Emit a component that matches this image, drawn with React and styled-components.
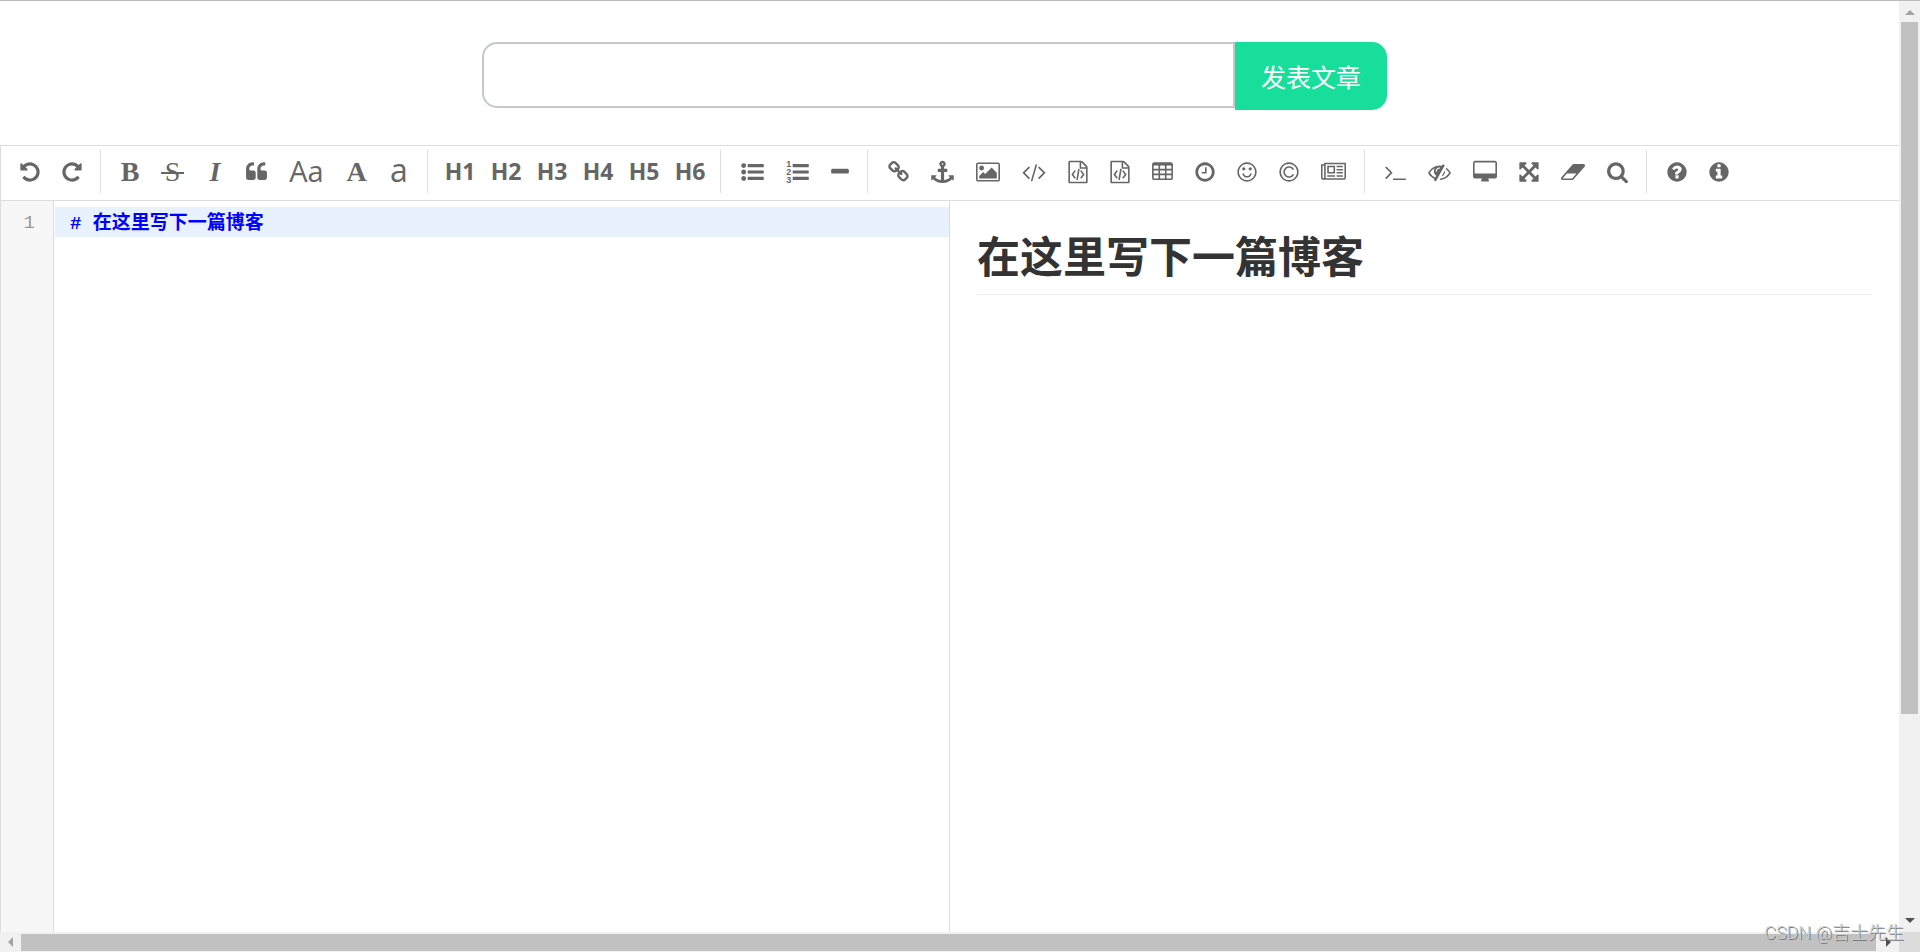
import { useState } from 'react'
import styled, { createGlobalStyle, css } from 'styled-components'

const sans = `'Open Sans', 'Noto Sans CJK SC', sans-serif`

const GlobalStyle = createGlobalStyle`
  * {
    box-sizing: border-box;
  }

  body {
    margin: 0;
    background: #fff;
    font-family: ${sans};
  }
`

// WINDOW

const Window = styled.div`
  display: grid;
  grid-template-columns: minmax(0, 1fr) 21px;
  grid-template-rows: minmax(0, 1fr) 20px;
  height: 100vh;
  border-top: 1px solid #bbb;
  overflow: hidden;
`

const Page = styled.main`
  display: flex;
  flex-direction: column;
  min-width: 0;
`

// SCROLLBARS

const Scrollbar = styled.div`
  display: flex;
  flex-direction: ${({ $horizontal }) => ($horizontal ? 'row' : 'column')};
  background: #f1f1f1;
`

const ScrollArrow = styled.button`
  display: flex;
  align-items: center;
  justify-content: center;
  flex: 0 0 ${({ $active }) => ($active ? '23px' : '21px')};
  padding: 0;
  border: 0;
  background: none;
  color: ${({ $active }) => ($active ? '#505050' : '#a3a3a3')};
`

const ScrollTrack = styled.div`
  flex: 1;
  display: flex;
  flex-direction: inherit;
  padding: ${({ $horizontal }) => ($horizontal ? '2px 0 1px' : '0 2px')};
`

const ScrollThumb = styled.div`
  flex: 0 0 ${({ $size }) => $size};
  background: #c1c1c1;
`

const Corner = styled.div`
  background: #dcdcdc;
`

function Arrow({ label, points, active }) {
  return (
    <ScrollArrow type="button" aria-label={label} $active={active}>
      <svg width="10" height="10" viewBox="0 0 10 10" fill="currentColor">
        <polygon points={points} />
      </svg>
    </ScrollArrow>
  )
}

// HEADER

const Header = styled.form`
  display: flex;
  align-items: flex-start;
  justify-content: center;
  padding: 41px 30px 35px 0;
`

const TitleInput = styled.input`
  width: 753px;
  min-width: 0;
  height: 66px;
  padding: 0 20px;
  border: 2px solid #c4c7ce;
  border-radius: 15px 0 0 15px;
  outline: none;
  font-family: ${sans};
  font-size: 24px;
`

const PublishButton = styled.button`
  flex: 0 0 152px;
  height: 68px;
  padding: 0;
  border: 0;
  border-radius: 0 15px 15px 0;
  background: #17df9b;
  color: #fff;
  font-family: 'Noto Sans CJK SC', sans-serif;
  font-size: 25px;
`

// TOOLBAR

const Toolbar = styled.div`
  display: flex;
  height: 56px;
  padding: 4px 8px 7px;
  border: 1px solid #ddd;
  border-right: 0;
  overflow: hidden;
`

const Group = styled.div`
  display: flex;

  & + & {
    margin-left: 7px;
    padding-left: 9px;
    border-left: 1px solid #ddd;
  }
`

const letterStyles = {
  heading: css`
    padding-bottom: 2px;
    font-weight: 700;
    font-size: 23px;
  `,
  plain: css`
    padding-bottom: 4px;
    font-size: 29px;
  `,
  lower: css`
    padding-bottom: 5px;
    font-size: 32px;
  `,
  serif: css`
    font-family: 'Liberation Serif', serif;
    font-size: 28px;
  `,
}

const ToolButton = styled.button`
  position: relative;
  display: flex;
  align-items: center;
  justify-content: center;
  flex: none;
  width: ${({ $width }) => $width}px;
  height: 44px;
  padding: 0;
  border: 0;
  background: none;
  color: #666;
  font-family: ${sans};
  ${({ $letter }) => letterStyles[$letter]}
  ${({ $bold }) => $bold && 'font-weight: 700;'}
  ${({ $italic }) => $italic && 'font-style: italic;'}

  &::after {
    content: ${({ $strike }) => ($strike ? "''" : 'none')};
    position: absolute;
    top: 22px;
    left: 11px;
    right: 11px;
    height: 2px;
    background: #666;
  }
`

const ICON_SIZES = { 1408: 18, 1536: 20, 1664: 21, 1792: 23, 1920: 24, 2048: 25 }

const RING =
  'M1536 896q0-130-51-248.5t-136.5-204-204-136.5-248.5-51-248.5 51-204 136.5-136.5 204-51 248.5 51 248.5 136.5 204 204 136.5 248.5 51 248.5-51 204-136.5 136.5-204 51-248.5zm128 0q0 209-103 385.5t-279.5 279.5-385.5 103-385.5-103-279.5-279.5-103-385.5 103-385.5 279.5-279.5 385.5-103 385.5 103 279.5 279.5 103 385.5z'

const FILE_CODE =
  'M1596 380q28 28 48 76t20 88v1152q0 40-28 68t-68 28h-1344q-40 0-68-28t-28-68v-1600q0-40 28-68t68-28h896q40 0 88 20t76 48zm-444-244v376h376q-10-29-22-41l-313-313q-12-12-41-22zm384 1528v-1024h-416q-40 0-68-28t-28-68v-416h-768v1536h1280zm-928-896q8-11 21-12.5t24 6.5l51 38q11 8 12.5 21t-6.5 24l-182 243 182 243q8 11 6.5 24t-12.5 21l-51 38q-11 8-24 6.5t-21-12.5l-226-301q-14-19 0-38zm802 301q14 19 0 38l-226 301q-8 11-21 12.5t-24-6.5l-51-38q-11-8-12.5-21t6.5-24l182-243-182-243q-8-11-6.5-24t12.5-21l51-38q11-8 24-6.5t21 12.5zm-620 461q-13-2-20.5-13t-5.5-24l138-831q2-13 13-20.5t24-5.5l63 10q13 2 20.5 13t5.5 24l-138 831q-2 13-13 20.5t-24 5.5z'

const icons = {
  undo: {
    width: 1536,
    d: 'M1664 896q0 156-61 298t-164 245-245 164-298 61q-172 0-327-72.5t-264-204.5q-7-10-6.5-22.5t8.5-20.5l137-138q10-9 25-9 16 2 23 12 73 95 179 147t225 52q104 0 198.5-40.5t163.5-109.5 109.5-163.5 40.5-198.5-40.5-198.5-109.5-163.5-163.5-109.5-198.5-40.5q-98 0-188 35.5t-160 101.5l137 138q31 30 14 69-17 40-59 40h-448q-26 0-45-19t-19-45v-448q0-42 40-59 39-17 69 14l130 129q107-101 244.5-156.5t284.5-55.5q156 0 298 61t245 164 164 245 61 298z',
  },
  redo: {
    width: 1536,
    d: 'M1664 256v448q0 26-19 45t-45 19h-448q-42 0-59-40-17-39 14-69l138-138q-148-137-349-137-104 0-198.5 40.5t-163.5 109.5-109.5 163.5-40.5 198.5 40.5 198.5 109.5 163.5 163.5 109.5 198.5 40.5q119 0 225-52t179-147q7-10 23-12 15 0 25 9l137 138q9 8 9.5 20.5t-7.5 22.5q-109 132-264 204.5t-327 72.5q-156 0-298-61t-245-164-164-245-61-298 61-298 164-245 245-164 298-61q147 0 284.5 55.5t244.5 156.5l130-129q29-31 70-14 39 17 39 59z',
  },
  quote: {
    width: 1664,
    d: 'M832 960v384q0 80-56 136t-136 56h-384q-80 0-136-56t-56-136v-704q0-104 40.5-198.5t109.5-163.5 163.5-109.5 198.5-40.5h64q26 0 45 19t19 45v128q0 26-19 45t-45 19h-64q-106 0-181 75t-75 181v32q0 40 28 68t68 28h224q80 0 136 56t56 136zm896 0v384q0 80-56 136t-136 56h-384q-80 0-136-56t-56-136v-704q0-104 40.5-198.5t109.5-163.5 163.5-109.5 198.5-40.5h64q26 0 45 19t19 45v128q0 26-19 45t-45 19h-64q-106 0-181 75t-75 181v32q0 40 28 68t68 28h224q80 0 136 56t56 136z',
  },
  listUl: {
    width: 1792,
    d: 'M384 1408q0 80-56 136t-136 56-136-56-56-136 56-136 136-56 136 56 56 136zm0-512q0 80-56 136t-136 56-136-56-56-136 56-136 136-56 136 56 56 136zm1408 416v192q0 13-9.5 22.5t-22.5 9.5h-1216q-13 0-22.5-9.5t-9.5-22.5v-192q0-13 9.5-22.5t22.5-9.5h1216q13 0 22.5 9.5t9.5 22.5zm-1408-928q0 80-56 136t-136 56-136-56-56-136 56-136 136-56 136 56 56 136zm1408 416v192q0 13-9.5 22.5t-22.5 9.5h-1216q-13 0-22.5-9.5t-9.5-22.5v-192q0-13 9.5-22.5t22.5-9.5h1216q13 0 22.5 9.5t9.5 22.5zm0-512v192q0 13-9.5 22.5t-22.5 9.5h-1216q-13 0-22.5-9.5t-9.5-22.5v-192q0-13 9.5-22.5t22.5-9.5h1216q13 0 22.5 9.5t9.5 22.5z',
  },
  listOl: {
    width: 1792,
    d: 'M1792 1312v192q0 13-9.5 22.5t-22.5 9.5h-1216q-13 0-22.5-9.5t-9.5-22.5v-192q0-14 9-23t23-9h1216q13 0 22.5 9.5t9.5 22.5zm0-512v192q0 13-9.5 22.5t-22.5 9.5h-1216q-13 0-22.5-9.5t-9.5-22.5v-192q0-14 9-23t23-9h1216q13 0 22.5 9.5t9.5 22.5zm0-512v192q0 13-9.5 22.5t-22.5 9.5h-1216q-13 0-22.5-9.5t-9.5-22.5v-192q0-13 9.5-22.5t22.5-9.5h1216q13 0 22.5 9.5t9.5 22.5z',
    extra: (
      <g fontFamily="Liberation Sans, sans-serif" fontWeight="700" fontSize="720">
        <text x="0" y="520">1</text>
        <text x="0" y="1150">2</text>
        <text x="0" y="1780">3</text>
      </g>
    ),
  },
  minus: {
    width: 1408,
    d: 'M1600 736v192q0 40-28 68t-68 28h-1216q-40 0-68-28t-28-68v-192q0-40 28-68t68-28h1216q40 0 68 28t28 68z',
  },
  link: {
    width: 1664,
    d: 'M1520 1216q0-40-28-68l-208-208q-28-28-68-28-42 0-72 32 3 3 19 18.5t21.5 21.5 15 19 13 25.5 3.5 27.5q0 40-28 68t-68 28q-15 0-27.5-3.5t-25.5-13-19-15-21.5-21.5-18.5-19q-33 31-33 73 0 40 28 68l206 207q27 27 68 27 40 0 68-26l147-146q28-28 28-67zm-703-705q0-40-28-68l-206-207q-28-28-68-28-39 0-68 27l-147 146q-28 28-28 67 0 40 28 68l208 208q27 27 68 27 42 0 72-31-3-3-19-18.5t-21.5-21.5-15-19-13-25.5-3.5-27.5q0-40 28-68t68-28q15 0 27.5 3.5t25.5 13 19 15 21.5 21.5 18.5 19q33-31 33-73zm895 705q0 120-85 203l-147 146q-83 83-203 83-121 0-204-85l-206-207q-83-83-83-203 0-123 88-209l-88-88q-86 88-208 88-120 0-204-84l-208-208q-84-84-84-204t85-203l147-146q83-83 203-83 121 0 204 85l206 207q83 83 83 203 0 123-88 209l88 88q86-88 208-88 120 0 204 84l208 208q84 84 84 204z',
  },
  anchor: {
    width: 1792,
    d: 'M960 256q0-26-19-45t-45-19-45 19-19 45 19 45 45 19 45-19 19-45zm832 928v352q0 22-20 30-8 2-12 2-12 0-23-9l-93-93q-119 143-318.5 226.5t-429.5 83.5-429.5-83.5-318.5-226.5l-93 93q-9 9-23 9-4 0-12-2-20-8-20-30v-352q0-14 9-23t23-9h352q22 0 30 20 8 19-7 35l-100 100q67 91 189.5 153.5t271.5 82.5v-647h-192q-26 0-45-19t-19-45v-128q0-26 19-45t45-19h192v-163q-58-34-93-92.5t-35-128.5q0-106 75-181t181-75 181 75 75 181q0 70-35 128.5t-93 92.5v163h192q26 0 45 19t19 45v128q0 26-19 45t-45 19h-192v647q149-20 271.5-82.5t189.5-153.5l-100-100q-15-16-7-35 8-20 30-20h352q14 0 23 9t9 23z',
  },
  image: {
    width: 1920,
    d: 'M640 576q0 80-56 136t-136 56-136-56-56-136 56-136 136-56 136 56 56 136zm1024 384v448h-1408v-192l320-320 160 160 512-512zm96-704h-1600q-13 0-22.5 9.5t-9.5 22.5v1216q0 13 9.5 22.5t22.5 9.5h1600q13 0 22.5-9.5t9.5-22.5v-1216q0-13-9.5-22.5t-22.5-9.5zm160 32v1216q0 66-47 113t-113 47h-1600q-66 0-113-47t-47-113v-1216q0-66 47-113t113-47h1600q66 0 113 47t47 113z',
  },
  code: {
    width: 1920,
    d: 'M617 1399l-50 50q-10 10-23 10t-23-10l-466-466q-10-10-10-23t10-23l466-466q10-10 23-10t23 10l50 50q10 10 10 23t-10 23l-393 393 393 393q10 10 10 23t-10 23zm591-1067l-373 1291q-4 13-15.5 19.5t-23.5 2.5l-62-17q-13-4-19.5-15.5t-2.5-24.5l373-1291q4-13 15.5-19.5t23.5-2.5l62 17q13 4 19.5 15.5t2.5 24.5zm657 651l-466 466q-10 10-23 10t-23-10l-50-50q-10-10-10-23t10-23l393-393-393-393q-10-10-10-23t10-23l50-50q10-10 23-10t23 10l466 466q10 10 10 23t-10 23z',
  },
  fileCode: { width: 1536, d: FILE_CODE },
  table: {
    width: 1664,
    d: 'M576 1376v-192q0-14-9-23t-23-9h-320q-14 0-23 9t-9 23v192q0 14 9 23t23 9h320q14 0 23-9t9-23zm0-384v-192q0-14-9-23t-23-9h-320q-14 0-23 9t-9 23v192q0 14 9 23t23 9h320q14 0 23-9t9-23zm512 384v-192q0-14-9-23t-23-9h-320q-14 0-23 9t-9 23v192q0 14 9 23t23 9h320q14 0 23-9t9-23zm-512-768v-192q0-14-9-23t-23-9h-320q-14 0-23 9t-9 23v192q0 14 9 23t23 9h320q14 0 23-9t9-23zm512 384v-192q0-14-9-23t-23-9h-320q-14 0-23 9t-9 23v192q0 14 9 23t23 9h320q14 0 23-9t9-23zm512 384v-192q0-14-9-23t-23-9h-320q-14 0-23 9t-9 23v192q0 14 9 23t23 9h320q14 0 23-9t9-23zm-512-768v-192q0-14-9-23t-23-9h-320q-14 0-23 9t-9 23v192q0 14 9 23t23 9h320q14 0 23-9t9-23zm512 384v-192q0-14-9-23t-23-9h-320q-14 0-23 9t-9 23v192q0 14 9 23t23 9h320q14 0 23-9t9-23zm0-384v-192q0-14-9-23t-23-9h-320q-14 0-23 9t-9 23v192q0 14 9 23t23 9h320q14 0 23-9t9-23zm128-320v1088q0 66-47 113t-113 47h-1344q-66 0-113-47t-47-113v-1088q0-66 47-113t113-47h1344q66 0 113 47t47 113z',
  },
  clock: {
    width: 1536,
    d: 'M1024 544v448q0 14-9 23t-23 9h-320q-14 0-23-9t-9-23v-64q0-14 9-23t23-9h224v-352q0-14 9-23t23-9h64q14 0 23 9t9 23zm416 352q0-148-73-273t-198-198-273-73-273 73-198 198-73 273 73 273 198 198 273 73 273-73 198-198 73-273zm224 0q0 209-103 385.5t-279.5 279.5-385.5 103-385.5-103-279.5-279.5-103-385.5 103-385.5 279.5-279.5 385.5-103 385.5 103 279.5 279.5 103 385.5z',
  },
  smile: {
    width: 1536,
    d: `M1262 1075q-37 121-138 195t-228 74-228-74-138-195q-8-25 4-48.5t38-31.5q25-8 48.5 4t31.5 38q25 80 92.5 129.5t151.5 49.5 151.5-49.5 92.5-129.5q8-26 32-38t49-4 37 31.5 4 48.5zm-494-435q0 53-37.5 90.5t-90.5 37.5-90.5-37.5-37.5-90.5 37.5-90.5 90.5-37.5 90.5 37.5 37.5 90.5zm512 0q0 53-37.5 90.5t-90.5 37.5-90.5-37.5-37.5-90.5 37.5-90.5 90.5-37.5 90.5 37.5 37.5 90.5z${RING}`,
  },
  copyright: {
    width: 1536,
    d: RING,
    extra: (
      <path d="M1250 700a400 400 0 1 0 0 392" fill="none" stroke="currentColor" strokeWidth="130" />
    ),
  },
  newspaper: {
    width: 2048,
    d: 'M1024 512h-384v384h384v-384zm128 640v128h-640v-128h640zm0-768v640h-640v-640h640zm640 768v128h-512v-128h512zm0-256v128h-512v-128h512zm0-256v128h-512v-128h512zm0-256v128h-512v-128h512zm-1536 960v-960h-128v960q0 26 19 45t45 19 45-19 19-45zm1664 0v-1088h-1536v1088q0 33-11 64h1483q26 0 45-19t19-45zm128-1216v1216q0 80-56 136t-136 56h-1664q-80 0-136-56t-56-136v-1088h256v-128h1792z',
  },
  terminal: {
    width: 1664,
    d: 'M649 983l-466 466q-10 10-23 10t-23-10l-50-50q-10-10-10-23t10-23l393-393-393-393q-10-10-10-23t10-23l50-50q10-10 23-10t23 10l466 466q10 10 10 23t-10 23zm1079 457v64q0 14-9 23t-23 9h-960q-14 0-23-9t-9-23v-64q0-14 9-23t23-9h960q14 0 23 9t9 23z',
  },
  eyeSlash: {
    width: 1792,
    d: 'M555 1335l78-141q-87-63-136-159t-49-203q0-121 61-225-229 117-381 353 167 258 427 375zm389-759q0-20-14-34t-34-14q-125 0-214.5 89.5t-89.5 214.5q0 20 14 34t34 14 34-14 14-34q0-86 61-147t147-61q20 0 34-14t14-34zm363-191q0 7-1 9-106 189-316 567t-315 566l-49 89q-10 16-28 16-12 0-134-70-16-10-16-28 0-12 44-87-143-65-263.5-173t-208.5-245q-20-31-20-69t20-69q153-235 380-371t496-136q89 0 180 17l54-97q10-16 28-16 5 0 18 6t31 15.5 33 18.5 31.5 18.5 19.5 11.5q16 10 16 27zm37 447q0 139-79 253.5t-209 164.5l280-502q8 45 8 84zm448 128q0 35-20 69-39 64-109 145-150 172-347.5 267t-419.5 95l74-132q212-18 392.5-137t301.5-307q-115-179-282-294l63-112q95 64 182.5 153t144.5 184q20 34 20 69z',
  },
  desktop: {
    width: 1920,
    d: 'M1792 992v-832q0-13-9.5-22.5t-22.5-9.5h-1600q-13 0-22.5 9.5t-9.5 22.5v832q0 13 9.5 22.5t22.5 9.5h1600q13 0 22.5-9.5t9.5-22.5zm128-832v1088q0 66-47 113t-113 47h-544q0 37 16 77.5t32 71 16 43.5q0 26-19 45t-45 19h-512q-26 0-45-19t-19-45q0-14 16-44t32-70 16-78h-544q-66 0-113-47t-47-113v-1088q0-66 47-113t113-47h1600q66 0 113 47t47 113z',
  },
  expand: {
    width: 1536,
    d: 'M1411 541l-355 355 355 355 144-144q29-31 70-14 39 17 39 59v448q0 26-19 45t-45 19h-448q-42 0-59-40-17-39 14-69l144-144-355-355-355 355 144 144q31 30 14 69-17 40-59 40h-448q-26 0-45-19t-19-45v-448q0-42 40-59 39-17 69 14l144 144 355-355-355-355-144 144q-19 19-45 19-12 0-24-5-40-17-40-59v-448q0-26 19-45t45-19h448q42 0 59 40 17 39-14 69l-144 144 355 355 355-355-144-144q-31-30-14-69 17-40 59-40h448q26 0 45 19t19 45v448q0 42-39 59-13 5-25 5-26 0-45-19z',
  },
  eraser: {
    width: 1920,
    d: 'M896 1408l336-384h-768l-336 384h768zm1013-1077q15 34 9.5 71.5t-30.5 65.5l-896 1024q-38 44-96 44h-768q-38 0-69.5-20.5t-47.5-54.5q-15-34-9.5-71.5t30.5-65.5l896-1024q38-44 96-44h768q38 0 69.5 20.5t47.5 54.5z',
  },
  search: {
    width: 1664,
    d: 'M1216 832q0-185-131.5-316.5t-316.5-131.5-316.5 131.5-131.5 316.5 131.5 316.5 316.5 131.5 316.5-131.5 131.5-316.5zm512 832q0 52-38 90t-90 38q-54 0-90-38l-343-342q-179 124-399 124-143 0-273.5-55.5t-225-150-150-225-55.5-273.5 55.5-273.5 150-225 225-150 273.5-55.5 273.5 55.5 225 150 150 225 55.5 273.5q0 220-124 399l343 343q37 37 37 90z',
  },
  help: {
    width: 1536,
    d: 'M1024 1376v-192q0-14-9-23t-23-9h-192q-14 0-23 9t-9 23v192q0 14 9 23t23 9h192q14 0 23-9t9-23zm256-672q0-88-55.5-163t-138.5-116-170-41q-243 0-400 213-15 25 8 42l132 100q7 6 19 6 16 0 25-12 53-68 86-92 34-24 86-24 48 0 85.5 26t37.5 59q0 38-20 61t-68 45q-63 28-115.5 86.5t-52.5 125.5v36q0 14 9 23t23 9h192q14 0 23-9t9-23q0-19 21.5-49.5t54.5-49.5q32-18 49-28.5t46-35 44.5-48 28-60.5 12.5-81zm384 192q0 209-103 385.5t-279.5 279.5-385.5 103-385.5-103-279.5-279.5-103-385.5 103-385.5 279.5-279.5 385.5-103 385.5 103 279.5 279.5 103 385.5z',
  },
  info: {
    width: 1536,
    d: 'M1152 1376v-160q0-14-9-23t-23-9h-96v-512q0-14-9-23t-23-9h-320q-14 0-23 9t-9 23v160q0 14 9 23t23 9h96v320h-96q-14 0-23 9t-9 23v160q0 14 9 23t23 9h448q14 0 23-9t9-23zm-128-896v-160q0-14-9-23t-23-9h-192q-14 0-23 9t-9 23v160q0 14 9 23t23 9h192q14 0 23-9t9-23zm640 416q0 209-103 385.5t-279.5 279.5-385.5 103-385.5-103-279.5-279.5-103-385.5 103-385.5 279.5-279.5 385.5-103 385.5 103 279.5 279.5 103 385.5z',
  },
}

const groups = [
  [
    { icon: 'undo', label: '撤销' },
    { icon: 'redo', label: '重做' },
  ],
  [
    { text: 'B', letter: 'serif', bold: true, width: 40, label: '粗体' },
    { text: 'S', letter: 'serif', strike: true, width: 45, label: '删除线' },
    { text: 'I', letter: 'serif', bold: true, italic: true, width: 40, label: '斜体' },
    { icon: 'quote', label: '引用' },
    { text: 'Aa', letter: 'plain', width: 57, label: '首字母转大写' },
    { text: 'A', letter: 'serif', bold: true, width: 43, label: '转成大写' },
    { text: 'a', letter: 'lower', width: 42, label: '转成小写' },
  ],
  [1, 2, 3, 4, 5, 6].map((n) => ({
    text: `H${n}`,
    letter: 'heading',
    width: 46,
    label: `标题${n}`,
  })),
  [
    { icon: 'listUl', label: '无序列表' },
    { icon: 'listOl', label: '有序列表' },
    { icon: 'minus', label: '横线' },
  ],
  [
    { icon: 'link', label: '链接' },
    { icon: 'anchor', label: '引用链接' },
    { icon: 'image', label: '图片' },
    { icon: 'code', label: '行内代码' },
    { icon: 'fileCode', label: '预格式文本' },
    { icon: 'fileCode', label: '代码块' },
    { icon: 'table', label: '表格' },
    { icon: 'clock', label: '日期时间' },
    { icon: 'smile', label: 'Emoji表情' },
    { icon: 'copyright', label: 'HTML实体字符' },
    { icon: 'newspaper', label: '分页符' },
  ],
  [
    { icon: 'terminal', label: '跳转到行' },
    { icon: 'eyeSlash', label: '关闭实时预览' },
    { icon: 'desktop', label: '全窗口预览' },
    { icon: 'expand', label: '全屏' },
    { icon: 'eraser', label: '清空' },
    { icon: 'search', label: '搜索' },
  ],
  [
    { icon: 'help', label: '使用帮助' },
    { icon: 'info', label: '关于' },
  ],
]

function Icon({ name }) {
  const { width, d, extra } = icons[name]
  const left = Math.max(0, (1792 - width) / 2)

  return (
    <svg
      width={ICON_SIZES[width]}
      height="24"
      viewBox={`${left} -60 ${width} 1912`}
      fill="currentColor"
      aria-hidden="true"
    >
      <path d={d} />
      {extra}
    </svg>
  )
}

function Tool({ icon, text, letter, bold, italic, strike, width, label }) {
  return (
    <ToolButton
      type="button"
      aria-label={label}
      $width={width || ICON_SIZES[icons[icon].width] + 22}
      $letter={letter}
      $bold={bold}
      $italic={italic}
      $strike={strike}
    >
      {icon ? <Icon name={icon} /> : text}
    </ToolButton>
  )
}

// EDITOR

const Panes = styled.div`
  flex: 1;
  display: flex;
  min-height: 0;
  border-left: 1px solid #ddd;
`

const Source = styled.div`
  flex: 0 0 50%;
  display: flex;
  min-width: 0;
  border-right: 1px solid #ddd;
`

const Gutter = styled.div`
  flex: 0 0 53px;
  padding: 7px 18px 0 0;
  border-right: 1px solid #ddd;
  background: #f7f7f7;
  color: #999;
  font-family: 'Liberation Mono', monospace;
  font-size: 19px;
  line-height: 30px;
  text-align: right;
`

const CodeArea = styled.textarea`
  flex: 1;
  min-width: 0;
  margin: 0 0 0 1px;
  padding: 8px 15px;
  border: 0;
  outline: none;
  resize: none;
  background: linear-gradient(#e8f2ff, #e8f2ff) 0 6px / 100% 30px no-repeat;
  color: #00f;
  font-family: 'Liberation Mono', 'Noto Sans CJK SC', monospace;
  font-weight: 700;
  font-size: 19px;
  line-height: 30px;
`

const Preview = styled.article`
  flex: 0 0 50%;
  min-width: 0;
  padding: 27px;
`

const PreviewTitle = styled.h1`
  margin: 0;
  padding-bottom: 13px;
  border-bottom: 1px solid #eee;
  color: #333;
  font-family: 'Noto Sans CJK SC', sans-serif;
  font-size: 43px;
  font-weight: 700;
  line-height: 53px;
`

const Watermark = styled.span`
  position: absolute;
  right: 16px;
  bottom: 8px;
  color: #ccc;
  font-family: Roboto, 'Noto Sans CJK SC', sans-serif;
  font-size: 18px;
  font-weight: 300;
  line-height: 22px;
  text-shadow: 1px 1px 0 #777;
  pointer-events: none;
`

export default function App() {
  const [title, setTitle] = useState('')
  const [source, setSource] = useState('# 在这里写下一篇博客')

  return (
    <>
      <GlobalStyle />
      <Window>
        <Page>
          <Header onSubmit={(e) => e.preventDefault()}>
            <TitleInput
              aria-label="文章标题"
              value={title}
              onChange={(e) => setTitle(e.target.value)}
            />
            <PublishButton type="submit">发表文章</PublishButton>
          </Header>
          <Toolbar>
            {groups.map((tools, i) => (
              <Group key={i}>
                {tools.map((tool) => (
                  <Tool key={tool.label} {...tool} />
                ))}
              </Group>
            ))}
          </Toolbar>
          <Panes>
            <Source>
              <Gutter>
                {source.split('\n').map((_, i) => (
                  <div key={i}>{i + 1}</div>
                ))}
              </Gutter>
              <CodeArea
                aria-label="Markdown"
                spellCheck={false}
                value={source}
                onChange={(e) => setSource(e.target.value)}
              />
            </Source>
            <Preview>
              <PreviewTitle>{source.replace(/^#\s*/, '')}</PreviewTitle>
            </Preview>
          </Panes>
        </Page>
        <Scrollbar>
          <Arrow label="向上滚动" points="5,3 10,8 0,8" />
          <ScrollTrack>
            <ScrollThumb $size="78%" />
          </ScrollTrack>
          <Arrow label="向下滚动" points="0,2 10,2 5,7" active />
        </Scrollbar>
        <Scrollbar $horizontal>
          <Arrow label="向左滚动" points="7,0 7,10 2,5" />
          <ScrollTrack $horizontal>
            <ScrollThumb $size="100%" />
          </ScrollTrack>
          <Arrow label="向右滚动" points="3,0 8,5 3,10" active />
        </Scrollbar>
        <Corner />
      </Window>
      <Watermark>CSDN @吉士先生</Watermark>
    </>
  )
}
